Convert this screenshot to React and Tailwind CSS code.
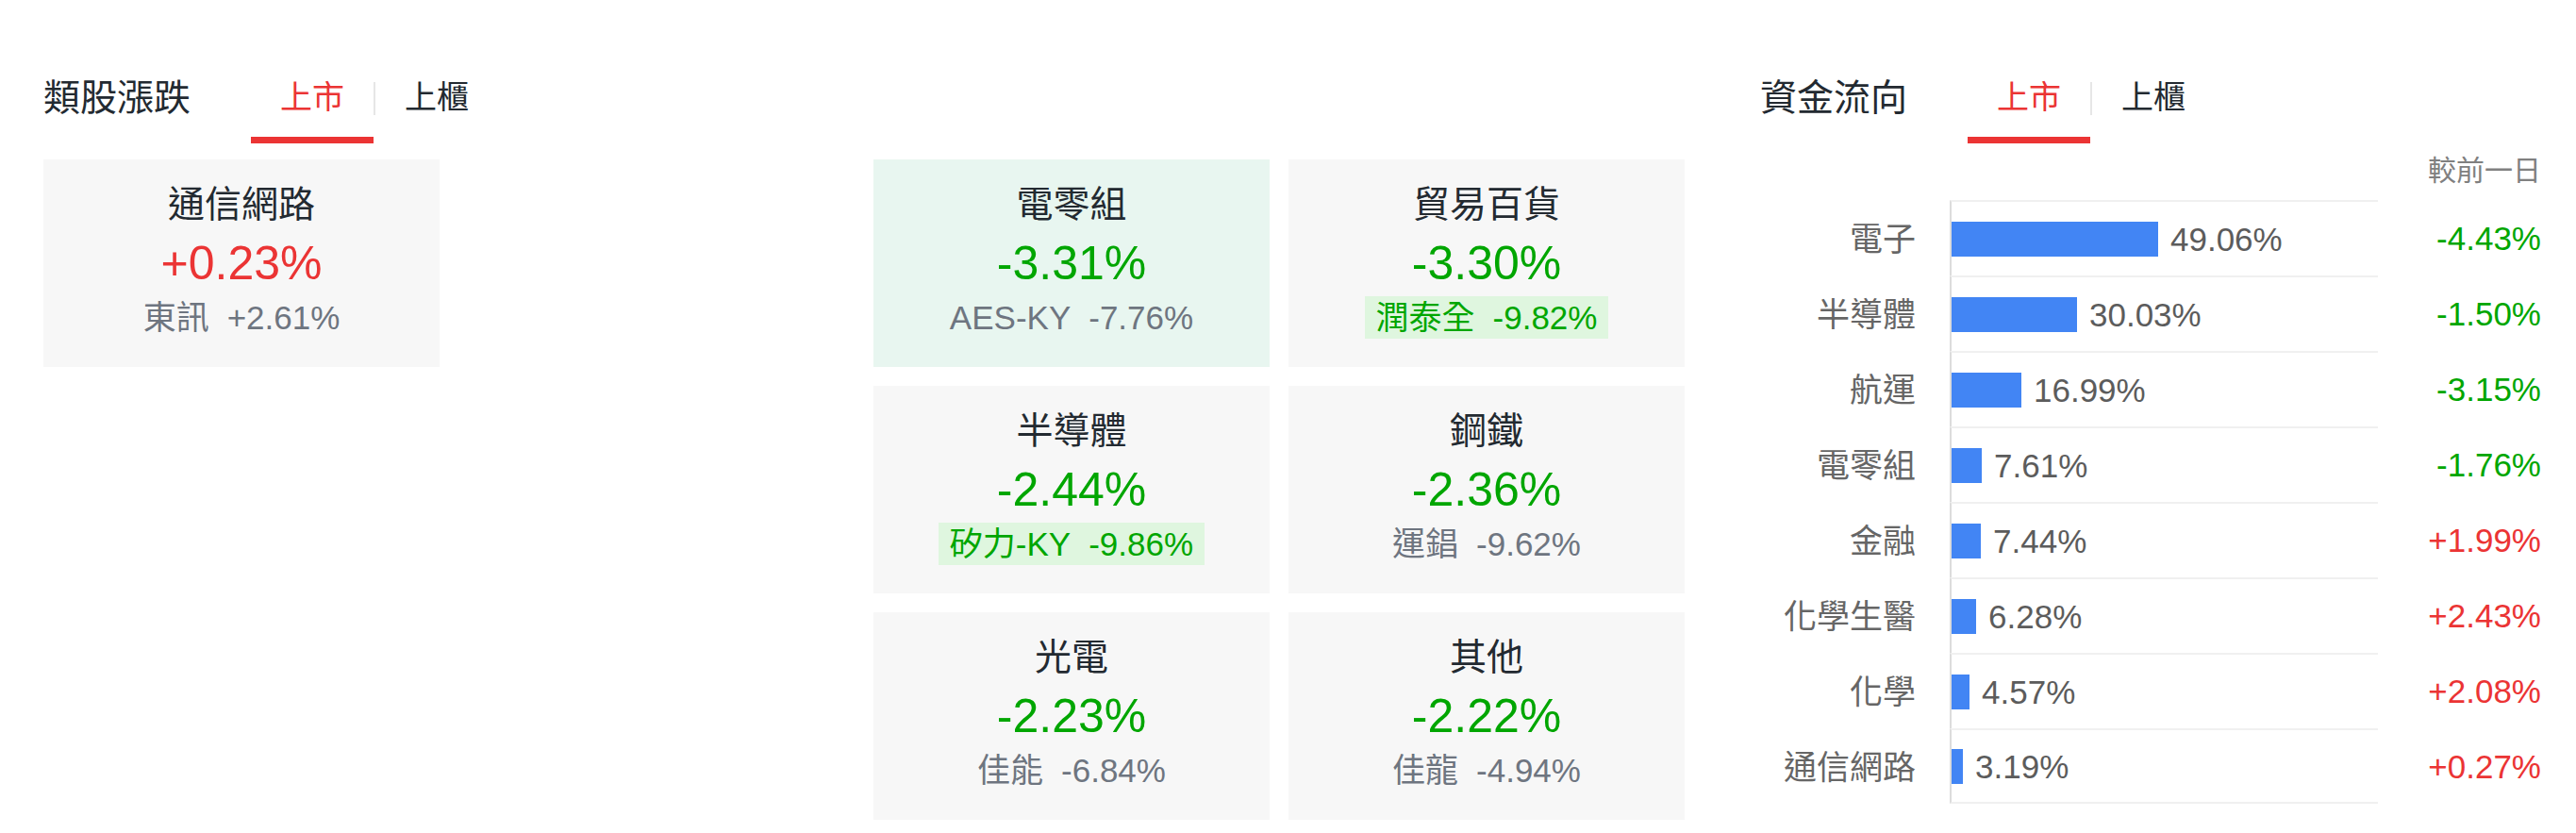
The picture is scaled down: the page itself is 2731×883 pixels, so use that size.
import React from "react";

const RED = "text-[#eb3434]";
const GREEN = "text-[#00a600]";

const leaders = [
  { name: "通信網路", pct: "+0.23%", up: true, stock: "東訊", stockPct: "+2.61%", hl: false, place: "col-start-1 row-start-1" },
];

const laggards = [
  { name: "電零組", pct: "-3.31%", stock: "AES-KY", stockPct: "-7.76%", hl: false, mint: true, place: "col-start-3 row-start-1" },
  { name: "貿易百貨", pct: "-3.30%", stock: "潤泰全", stockPct: "-9.82%", hl: true, place: "col-start-4 row-start-1" },
  { name: "半導體", pct: "-2.44%", stock: "矽力-KY", stockPct: "-9.86%", hl: true, place: "col-start-3 row-start-2" },
  { name: "鋼鐵", pct: "-2.36%", stock: "運錩", stockPct: "-9.62%", hl: false, place: "col-start-4 row-start-2" },
  { name: "光電", pct: "-2.23%", stock: "佳能", stockPct: "-6.84%", hl: false, place: "col-start-3 row-start-3" },
  { name: "其他", pct: "-2.22%", stock: "佳龍", stockPct: "-4.94%", hl: false, place: "col-start-4 row-start-3" },
];

const flows = [
  { name: "電子", share: 49.06, diff: "-4.43%", up: false },
  { name: "半導體", share: 30.03, diff: "-1.50%", up: false },
  { name: "航運", share: 16.99, diff: "-3.15%", up: false },
  { name: "電零組", share: 7.61, diff: "-1.76%", up: false },
  { name: "金融", share: 7.44, diff: "+1.99%", up: true },
  { name: "化學生醫", share: 6.28, diff: "+2.43%", up: true },
  { name: "化學", share: 4.57, diff: "+2.08%", up: true },
  { name: "通信網路", share: 3.19, diff: "+0.27%", up: true },
];

function MarketTabs() {
  return (
    <div className="flex items-start ml-[64px] mt-[2px]">
      <div className="w-[130px] pb-[25px] border-b-[7px] border-[#eb3434] text-center text-[34px] leading-[34px] text-[#eb3434]">
        上市
      </div>
      <div className="w-[2px] h-[35px] mt-[1px] bg-[#e6e6e6]" />
      <div className="w-[130px] text-center text-[34px] leading-[34px] text-[#232a31]">上櫃</div>
    </div>
  );
}

function SectionHeader({ title }) {
  return (
    <div className="flex items-start pt-[84px]">
      <h2 className="text-[39px] leading-[39px] font-normal text-[#232a31]">{title}</h2>
      <MarketTabs />
    </div>
  );
}

function SectorCard({ s }) {
  return (
    <div
      className={`h-[220px] pt-[21px] flex flex-col items-center ${s.mint ? "bg-[#e8f6f0]" : "bg-[#f7f7f7]"} ${s.place}`}
    >
      <div className="text-[39px] leading-[54px] text-[#232a31]">{s.name}</div>
      <div className={`text-[50px] leading-[70px] ${s.up ? RED : GREEN}`}>{s.pct}</div>
      <div
        className={`h-[45px] px-3 flex items-center text-[35px] leading-[35px] ${
          s.hl ? "bg-[#dff6df] text-[#00a600]" : "text-[#6e7580]"
        }`}
      >
        <span>{s.stock}</span>
        <span className="ml-[19px]">{s.stockPct}</span>
      </div>
    </div>
  );
}

function FlowRow({ f, last }) {
  return (
    <div className="flex items-center h-[80px]">
      <div className="w-[165px] pt-[3px] text-right text-[35px] leading-[35px] text-[#666666]">{f.name}</div>
      <div
        className={`ml-[36px] w-[454px] h-full flex items-center border-l-2 border-t-2 border-l-[#dcdcdc] border-t-[#f0f0f0] ${
          last ? "border-b-2 border-b-[#f0f0f0]" : ""
        }`}
      >
        <div className="h-[37px] bg-[#4285f4]" style={{ width: Math.round(f.share * 4.5 - 2) }} />
        <span className="ml-[13px] text-[35px] leading-[35px] text-[#5c5c5c]">{f.share.toFixed(2)}%</span>
      </div>
      <div className={`w-[173px] text-right text-[35px] leading-[35px] ${f.up ? RED : GREEN}`}>{f.diff}</div>
    </div>
  );
}

export default function App() {
  return (
    <div className="w-[2731px] h-[883px] bg-white flex pl-[46px] [font-family:'Liberation_Sans','Noto_Sans_CJK_TC',sans-serif]">
      <section className="w-[1740px]">
        <SectionHeader title="類股漲跌" />
        <div className="mt-[17px] grid grid-cols-[repeat(4,420px)] grid-rows-[repeat(3,220px)] gap-[20px]">
          {leaders.map((s) => (
            <SectorCard key={s.name} s={s} />
          ))}
          {laggards.map((s) => (
            <SectorCard key={s.name} s={s} />
          ))}
        </div>
      </section>

      <section className="ml-[80px] w-[828px]">
        <SectionHeader title="資金流向" />
        <div className="mt-[14px] text-right text-[30px] leading-[30px] text-[#808080]">較前一日</div>
        <div className="mt-[16px]">
          {flows.map((f, i) => (
            <FlowRow key={f.name} f={f} last={i === flows.length - 1} />
          ))}
        </div>
      </section>
    </div>
  );
}
